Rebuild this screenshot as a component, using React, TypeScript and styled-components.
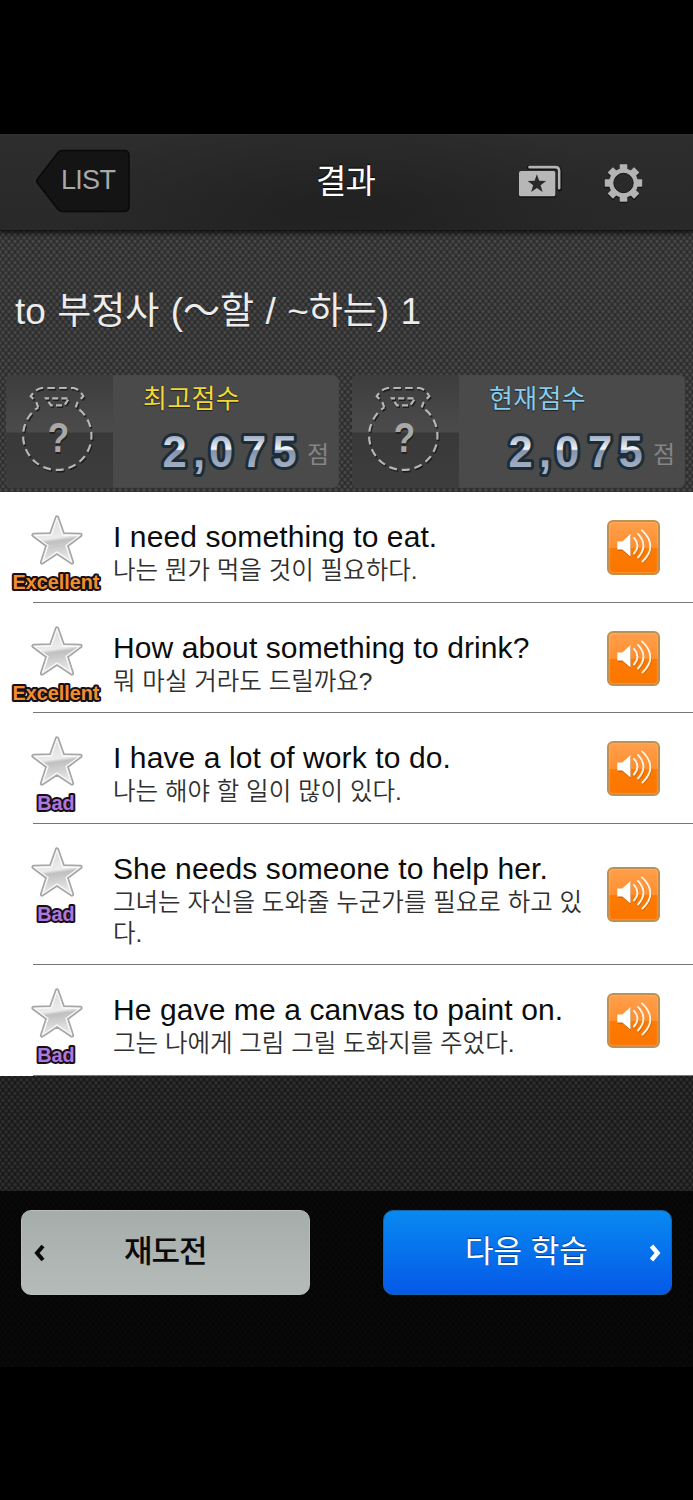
import React from 'react';
import styled, { createGlobalStyle, css } from 'styled-components';

const sans = `"Liberation Sans", "Noto Sans CJK KR", sans-serif`;

const Global = createGlobalStyle`
  html, body { margin: 0; background: #000; }
  * { box-sizing: border-box; }
  body { font-family: ${sans}; }
  button { font-family: inherit; border: 0; padding: 0; margin: 0; background: none; }
`;

const mesh = (dot: string) => css`
  background-image:
    radial-gradient(circle, ${dot} 1px, transparent 2.3px),
    radial-gradient(circle, ${dot} 1px, transparent 2.3px);
  background-size: 6px 7px;
  background-position: 0 0, 3px 3.5px;
`;

const Screen = styled.main`
  width: 693px;
  height: 1500px;
  padding-top: 134px;
  display: flex;
  flex-direction: column;
  overflow: hidden;
  background: #000;
`;

const Toolbar = styled.header`
  height: 97px;
  flex: none;
  position: relative;
  display: grid;
  grid-template-columns: 36px 94px 1fr 44px 40px 42px 48px;
  align-items: start;
  background: radial-gradient(ellipse 300px 90px at 50% 75%, rgba(0, 0, 0, 0.22), transparent), linear-gradient(#2d2d2d, #292929);
  border-top: 1px solid #303030;
  border-bottom: 1px solid #131313;
  box-shadow: 0 2px 5px rgba(0, 0, 0, 0.7);
`;

const ListButton = styled.button`
  grid-column: 2;
  margin-top: 14px;
  height: 65px;
  display: grid;
  color: #a8a8a8;
  font-size: 27px;
  & > * { grid-area: 1 / 1; }
`;

const ListLabel = styled.span`
  padding: 16px 0 0 25px;
  line-height: 31px;
  text-align: left;
  letter-spacing: -0.7px;
`;

const Title = styled.h1`
  grid-column: 3;
  margin: 25px 0 0 186px;
  font-size: 33px;
  line-height: 44px;
  font-weight: 400;
  letter-spacing: -0.8px;
  white-space: nowrap;
  color: #fff;
  text-shadow: 0 -1px 1px #000;
`;

const IconSlot = styled.button<{ $column: number; $top: number }>`
  grid-column: ${(p) => p.$column};
  margin-top: ${(p) => p.$top}px;
  display: flex;
`;

const Summary = styled.section`
  height: 261px;
  flex: none;
  padding: 0 8px 0 6px;
  background-color: #2d2d2d;
  ${mesh('#484848')}
`;

const Heading = styled.h2`
  margin: 0;
  height: 144px;
  padding: 55px 0 0 9px;
  font-size: 37px;
  line-height: 52px;
  font-weight: 400;
  word-spacing: 1.1px;
  color: #ececec;
  white-space: nowrap;
  text-shadow: 0 1px 1px #222;
`;

const Scores = styled.div`
  display: flex;
  gap: 13px;
`;

const ScoreCard = styled.article`
  width: 333px;
  height: 113px;
  display: flex;
  overflow: hidden;
  border-radius: 6px;
  background: #4a4a4a;
  box-shadow: inset 0 0 1px #383838;
`;

const Badge = styled.div`
  width: 107px;
  padding: 8px 0 0 12px;
  background: linear-gradient(#3d3d3d 0, #4b4b4b 57px, #393939 58px, #3d3d3d 100%);
`;

const ScoreBody = styled.div`
  flex: 1;
  padding-top: 6px;
`;

const ScoreLabel = styled.div<{ $tone: string }>`
  padding-left: 30px;
  font-size: 26px;
  line-height: 36px;
  letter-spacing: 0.3px;
  color: ${(p) => p.$tone};
  text-shadow: 0 0 1px #222, 0 1px 1px #222;
`;

const ScoreLine = styled.div`
  display: flex;
  padding-left: 47px;
  height: 60px;
`;

const Unit = styled.span`
  width: 26px;
  margin-top: 22px;
  font-size: 24px;
  line-height: 32px;
  color: #858585;
`;

const Results = styled.ul`
  list-style: none;
  margin: 0;
  padding: 0;
  background: #fff;
`;

const ResultRow = styled.li<{ $height: number }>`
  height: ${(p) => p.$height}px;
  display: grid;
  grid-template-columns: 113px 494px 1fr;
  background: linear-gradient(#777, #777) 33px 100% / 660px 1px no-repeat;
`;

const Rating = styled.div`
  display: flex;
  flex-direction: column;
  align-items: center;
  padding-top: 22px;
  height: 110px;
  width: 113px;
`;

const Texts = styled.div`
  padding-top: 27px;
`;

const English = styled.p`
  margin: 0;
  font-size: 30px;
  line-height: 36px;
  letter-spacing: 0.1px;
  white-space: nowrap;
  color: #0c0c0c;
`;

const Korean = styled.p`
  margin: 0;
  width: 480px;
  font-size: 24.5px;
  line-height: 31px;
  font-weight: 350;
  white-space: pre;
  color: #303030;
`;

const Speaker = styled.button`
  align-self: center;
  width: 53px;
  height: 55px;
  border-radius: 6px;
  border: 2px solid #bf9150;
  box-shadow: inset 0 0 2px #ffc58a;
  background: linear-gradient(#ff9f4c 0, #ff8f30 50%, #ff7a00 51%, #fb7600 100%);
`;

const Gap = styled.div`
  height: 115px;
  flex: none;
  background-color: #191919;
  ${mesh('#303030')}
`;

const Footer = styled.footer`
  height: 176px;
  flex: none;
  display: flex;
  justify-content: space-between;
  align-items: flex-start;
  padding: 19px 21px 0;
  background-color: #050505;
  ${mesh('#090909')}
`;

const ActionButton = styled.button<{ $primary?: boolean }>`
  width: 289px;
  height: 85px;
  display: flex;
  align-items: center;
  border-radius: 10px;
  font-size: 31px;
  ${(p) =>
    p.$primary
      ? css`
          justify-content: space-between;
          color: #fff;
          border: 1px solid #1465a8;
          background: linear-gradient(#0889f0, #0559e8);
          text-shadow: 0 -1px 1px #0a3f90;
        `
      : css`
          color: #0a0a0a;
          font-weight: 500;
          border: 1px solid #b9bdbb;
          background: linear-gradient(#a5adaa, #b5bbb8);
        `}
`;

const ActionLabel = styled.span<{ $left: number; $spacing: number }>`
  margin-left: ${(p) => p.$left}px;
  margin-bottom: 1px;
  line-height: 44px;
  letter-spacing: ${(p) => p.$spacing}px;
  white-space: nowrap;
`;

function CardsIcon() {
  return (
    <svg width="46" height="36" viewBox="0 0 46 36">
      <path d="M10.500 3.500h27.500q4.500 0 4.500 4.500v18" fill="none" stroke="#000" strokeOpacity=".6" strokeWidth="4.500" strokeLinecap="round" transform="translate(0 .6)" />
      <path d="M11 3.500h27q4 0 4 4v18" fill="none" stroke="#b5b5b5" strokeWidth="2.700" strokeLinecap="round" />
      <rect x="0" y="8.500" width="38.500" height="27" rx="2" fill="#111" />
      <rect x="0" y="7.500" width="38" height="26.500" rx="2" fill="#b7b7b7" />
      <path d="M18.700 11l2.400 6.800 7.200 .2-5.700 4.400 2.100 7-6-4.100-6 4.100 2.100-7-5.700-4.400 7.200-.2z" fill="#2a2a2a" />
    </svg>
  );
}

function GearIcon() {
  return (
    <svg width="42" height="42" viewBox="-20.500 -21 42 42">
      {['#111', '#b3b3b3'].map((color, i) => (
        <g key={color} transform={i ? undefined : 'translate(0 1.300)'} fill={color}>
          {[0, 45, 90, 135].map((angle) => (
            <rect key={angle} x="-3.800" y="-18.700" width="7.600" height="37.400" rx="0.800" transform={`rotate(${angle})`} />
          ))}
          <circle r="14.500" />
        </g>
      ))}
      <circle r="9.700" fill="#2a2a2a" stroke="#151515" />
    </svg>
  );
}

function MedalOutline() {
  const outline = (
    <>
      <path d="M20.300 25.300l-2-5.300-5.600-5.700q4.500-7 11-8.300h31.600q6.500 1.300 10 8.300l-5.600 5.700-2 5.300" strokeDasharray="7.500 4.300" strokeDashoffset="2" />
      <path d="M28 16.300h23l-4.500 7h-13.500z" strokeDasharray="6 3.200" strokeDashoffset="3" />
      <path d="M20.300 25.300A34.200 34.200 0 1 0 58.300 25.300" strokeDasharray="7.900 4.900" strokeDashoffset="4" />
    </>
  );
  return (
    <svg width="80" height="96" viewBox="0 0 80 96" fill="none" strokeWidth="2.200">
      <g stroke="#1c1c1c" transform="translate(1 .5)">{outline}</g>
      <g stroke="#b6b6b6" transform="translate(0 -1)">{outline}</g>
      <g fontFamily={sans} fontSize="42" fontWeight="700" textAnchor="middle" transform="translate(40.500 -.5) scale(.84 1)">
        <text x="0.500" y="71.500" fill="#222">?</text>
        <text x="0" y="70" fill="#a8a8a8">?</text>
      </g>
    </svg>
  );
}

function ScoreNumber({ id, value }: { id: string; value: string }) {
  return (
    <svg width="147" height="60" viewBox="0 0 147 60">
      <defs>
        <linearGradient id={id} gradientUnits="userSpaceOnUse" x1="0" y1="19" x2="0" y2="51">
          <stop offset="0" stopColor="#a0aec4" />
          <stop offset=".41" stopColor="#f4f7fb" />
          <stop offset=".46" stopColor="#8593ab" />
          <stop offset="1" stopColor="#a5b1c5" />
        </linearGradient>
      </defs>
      <text
        x="2.500 33 49 82 112.500"
        y="49.500"
        fontFamily={sans}
        fontSize="43.500"
        fontWeight="700"
        fill={`url(#${id})`}
        stroke="#1c2d38"
        strokeWidth="6"
        strokeLinejoin="round"
        paintOrder="stroke"
      >
        {value}
      </text>
    </svg>
  );
}

function StarIcon() {
  return (
    <svg width="56" height="54" viewBox="0 0 56 54">
      <defs>
        <linearGradient id="starTop" x1="0" y1="0" x2="0.150" y2="1">
          <stop offset="0" stopColor="#dadada" />
          <stop offset=".5" stopColor="#ececec" />
          <stop offset=".58" stopColor="#c0c0c0" />
          <stop offset="1" stopColor="#e4e4e4" />
        </linearGradient>
      </defs>
      <path d="M28 3.500L34 20.500L51.500 21L37.500 31.500L43 48.500L28 38.500L13 48.500L18.500 31.500L4.500 21L22 20.500Z" fill="#a6a6a6" stroke="#a6a6a6" strokeWidth="4.300" strokeLinejoin="round" />
      <path d="M28 3.500L34 20.500L51.500 21L37.500 31.500L43 48.500L28 38.500L13 48.500L18.500 31.500L4.500 21L22 20.500Z" fill="#fff" stroke="#f6f6f6" strokeWidth="1" strokeLinejoin="round" />
      <path d="M28 6L33.200 21.500L49 22L36.300 31.200L41.300 46.500L28 37.300L14.700 46.500L19.700 31.200L7 22L22.800 21.500Z" fill="url(#starTop)" />
    </svg>
  );
}

function Grade({ label, color }: { label: string; color: string }) {
  return (
    <svg width="100" height="26" viewBox="0 0 100 26">
      <text
        x="49"
        y="20.500"
        textAnchor="middle"
        fontFamily={sans}
        fontSize="19.800"
        fontWeight="700"
        fill={color}
        stroke="#171019"
        strokeWidth="4"
        strokeLinejoin="round"
        paintOrder="stroke"
      >
        {label}
      </text>
    </svg>
  );
}

function SpeakerIcon() {
  const glyph = (
    <>
      <path d="M8.300 19.500h5l8.200-7.500v22.500l-8.200-7h-5z" stroke="none" />
      <path d="M25 16q7 7.500 0 15.500M29 12q11 11.500 0 23.500M33 8.500q16.500 15.500 .5 31" fill="none" strokeWidth="2" strokeLinecap="round" />
    </>
  );
  return (
    <svg width="49" height="51" viewBox="0 0 49 51">
      <g fill="#c75f08" stroke="#d66a0a" transform="translate(.5 1.300)">{glyph}</g>
      <g fill="#fff" stroke="#fff2e0">{glyph}</g>
    </svg>
  );
}

const scores = [
  { id: 'best', label: '최고점수', tone: '#f2d935', value: '2,075' },
  { id: 'current', label: '현재점수', tone: '#86cdf0', value: '2,075' },
];

const results = [
  { grade: 'Excellent', en: 'I need something to eat.', ko: '나는 뭔가 먹을 것이 필요하다.', height: 111 },
  { grade: 'Excellent', en: 'How about something to drink?', ko: '뭐 마실 거라도 드릴까요?', height: 110 },
  { grade: 'Bad', en: 'I have a lot of work to do.', ko: '나는 해야 할 일이 많이 있다.', height: 111 },
  { grade: 'Bad', en: 'She needs someone to help her.', ko: '그녀는 자신을 도와줄 누군가를 필요로 하고 있\n다.', height: 141 },
  { grade: 'Bad', en: 'He gave me a canvas to paint on.', ko: '그는 나에게 그림 그릴 도화지를 주었다.', height: 111 },
];

export default function App() {
  return (
    <>
      <Global />
      <Screen>
        <Toolbar>
          <ListButton>
            <svg width="94" height="65" viewBox="0 0 94 65">
              <path d="M26 1.500h62q5 0 5 5v51q0 5-5 5H26q-2 0-4-2L1.500 34q-1.500-2 0-4L22 3.500q2-2 4-2z" fill="#141414" stroke="#090909" strokeWidth="1.500" />
            </svg>
            <ListLabel>LIST</ListLabel>
          </ListButton>
          <Title>결과</Title>
          <IconSlot $column={4} $top={28} aria-label="cards"><CardsIcon /></IconSlot>
          <IconSlot $column={6} $top={27} aria-label="settings"><GearIcon /></IconSlot>
        </Toolbar>
        <Summary>
          <Heading>to 부정사 (～할 / ~하는) 1</Heading>
          <Scores>
            {scores.map((s) => (
              <ScoreCard key={s.id}>
                <Badge><MedalOutline /></Badge>
                <ScoreBody>
                  <ScoreLabel $tone={s.tone}>{s.label}</ScoreLabel>
                  <ScoreLine>
                    <ScoreNumber id={s.id} value={s.value} />
                    <Unit>점</Unit>
                  </ScoreLine>
                </ScoreBody>
              </ScoreCard>
            ))}
          </Scores>
        </Summary>
        <Results>
          {results.map((r) => (
            <ResultRow key={r.en} $height={r.height}>
              <Rating>
                <StarIcon />
                <Grade label={r.grade} color={r.grade === 'Bad' ? '#b277dc' : '#f28f2c'} />
              </Rating>
              <Texts>
                <English>{r.en}</English>
                <Korean>{r.ko}</Korean>
              </Texts>
              <Speaker aria-label="play"><SpeakerIcon /></Speaker>
            </ResultRow>
          ))}
        </Results>
        <Gap />
        <Footer>
          <ActionButton>
            <svg width="36" height="24" viewBox="0 0 36 24"><path d="M21 5l-6 7 6 7" fill="none" stroke="#0a0a0a" strokeWidth="4" /></svg>
            <ActionLabel $left={66} $spacing={-1}>재도전</ActionLabel>
          </ActionButton>
          <ActionButton $primary>
            <ActionLabel $left={81} $spacing={0}>다음 학습</ActionLabel>
            <svg width="36" height="24" viewBox="0 0 36 24"><path d="M16.500 5l6 7-6 7" fill="none" stroke="#fff" strokeWidth="4.500" /></svg>
          </ActionButton>
        </Footer>
      </Screen>
    </>
  );
}
